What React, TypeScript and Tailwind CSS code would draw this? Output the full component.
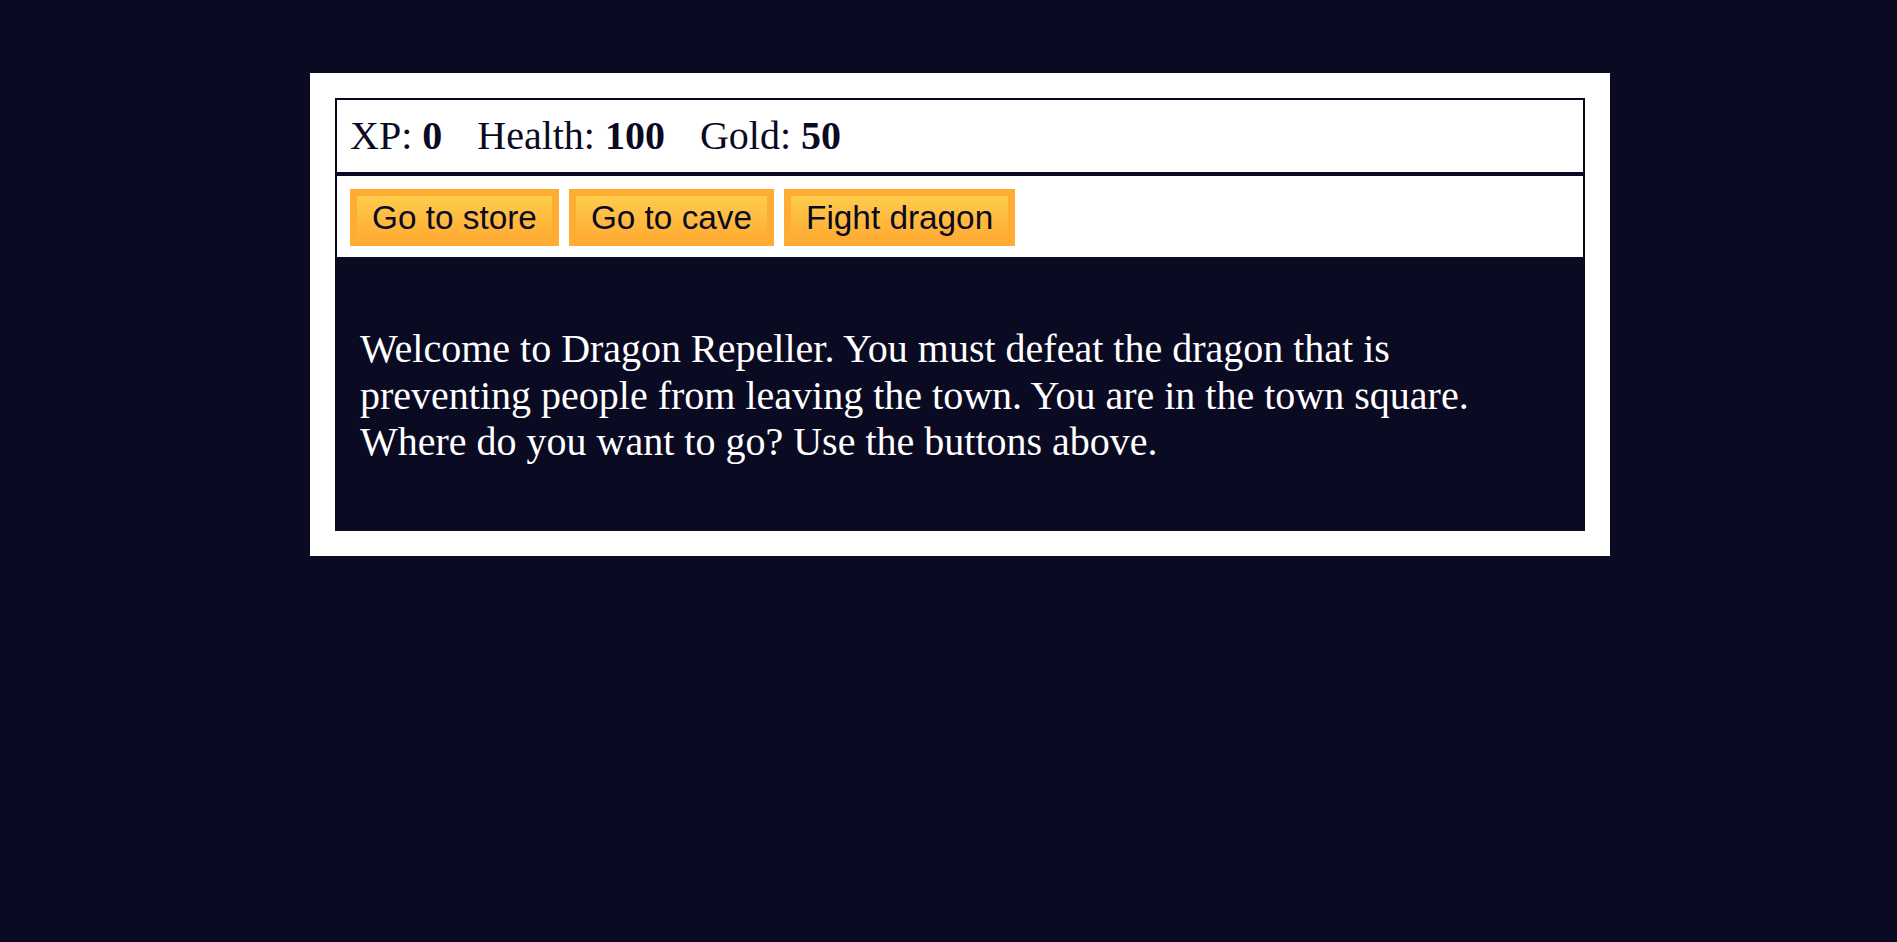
import React from "react";

export default function App() {
  const btn =
    "border-[7px] border-solid border-[#feac32] bg-[#feac32] bg-linear-to-b from-[#fecc4c] to-[#ffac33] px-[15px] py-[2.5px] text-[33.33px] leading-[38px] text-[#0a0a23] cursor-pointer whitespace-nowrap";
  const sans = { fontFamily: '"Liberation Sans", Arial, sans-serif' };
  return (
    <div
      className="min-h-[942px] w-full bg-[#0a0a23] pt-[73px]"
      style={{ fontFamily: '"Liberation Serif", "Times New Roman", serif' }}
    >
      <div className="ml-[310px] w-[1300px] bg-white p-[25px] text-white">
        <div className="border-2 border-solid border-[#0a0a23] px-[13px] pt-[13px] pb-[13px] text-[40px] leading-[46px] text-[#0a0a23]">
          <span className="pr-[25px]">
            XP: <strong className="font-bold">0</strong>
          </span>{" "}
          <span className="pr-[25px]">
            Health: <strong className="font-bold">100</strong>
          </span>{" "}
          <span className="pr-[25px]">
            Gold: <strong className="font-bold">50</strong>
          </span>
        </div>
        <div
          className="flex gap-[10px] border-2 border-solid border-[#0a0a23] px-[13px] pt-[13px] pb-[11px]"
          style={sans}
        >
          <button className={btn} style={sans}>Go to store</button>
          <button className={btn} style={sans}>Go to cave</button>
          <button className={btn} style={sans}>Fight dragon</button>
        </div>
        <div className="bg-[#0a0a23] p-[25px] text-[40px] leading-[46.67px] text-white">
          <p className="mt-[42px] mb-[40px]">
            Welcome to Dragon Repeller. You must defeat the dragon that is preventing people from leaving the
            town. You are in the town square. Where do you want to go? Use the buttons above.
          </p>
        </div>
      </div>
    </div>
  );
}
